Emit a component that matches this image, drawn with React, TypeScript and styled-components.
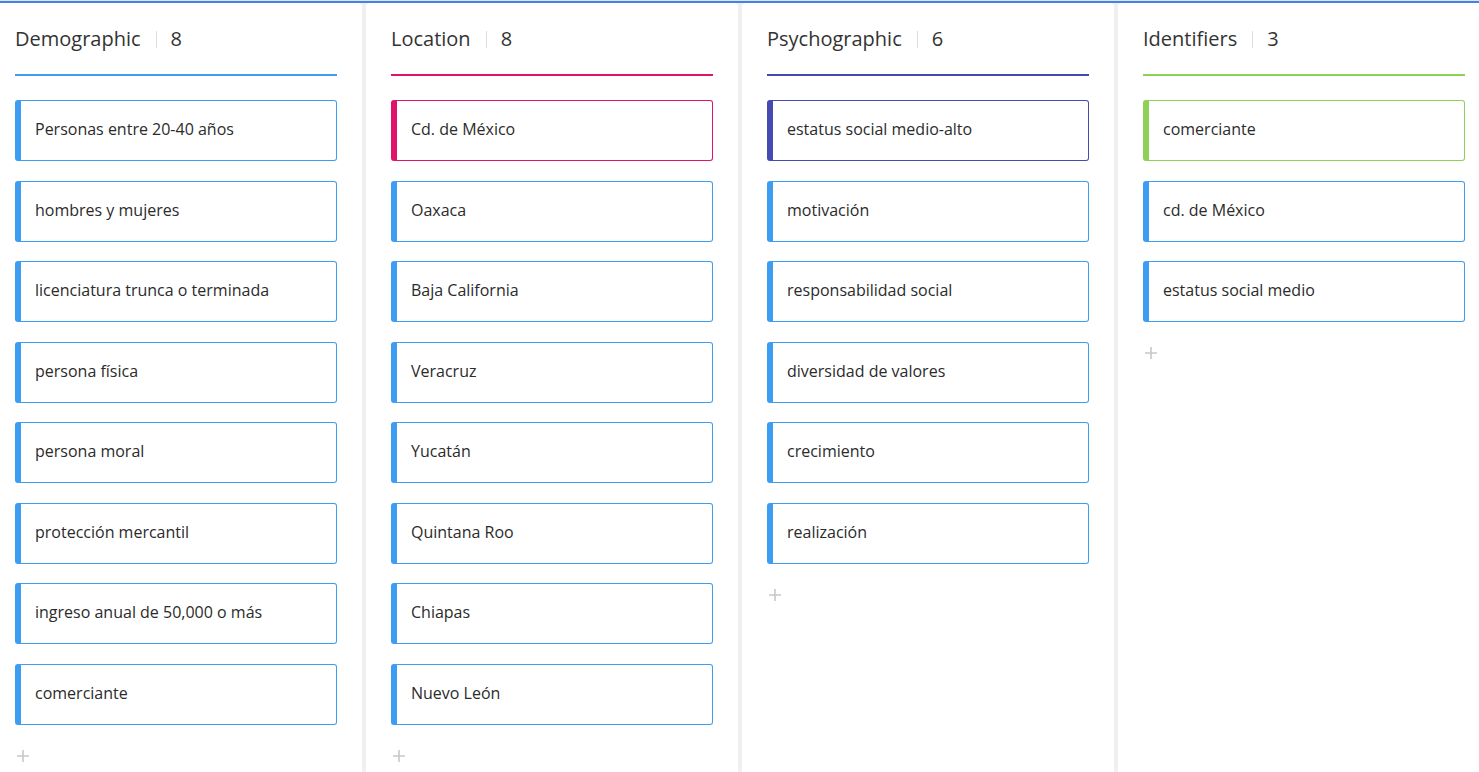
import React from "react";
import styled, { createGlobalStyle } from "styled-components";

const GlobalStyle = createGlobalStyle`
  html, body {
    margin: 0;
    padding: 0;
    height: 100%;
    overflow: hidden;
    background: #f0f0f0;
    font-family: "Open Sans", "Noto Sans", sans-serif;
    color: #333333;
  }
`;

const colors = {
  blue: "#3d9df3",
  pink: "#e0126a",
  indigo: "#4549b0",
  green: "#8fd056",
  divider: "#dddddd",
  plus: "#c8c8c8",
  gutter: "#f0f0f0",
};

const TopBar = styled.div`
  height: 2px;
  border-top: 1px solid #e4e4e4;
  background-color: #3f83ef;
`;

const Board = styled.div`
  display: flex;
  gap: 4px;
  margin-left: -10px;
  height: calc(100vh - 3px);
  background-color: ${colors.gutter};
`;

const Column = styled.section`
  flex: 0 0 372px;
  box-sizing: border-box;
  padding: 0 25px;
  background-color: #ffffff;
  border-radius: 4px 4px 0 0;
`;

const ColumnHeader = styled.header<{ $accent: string }>`
  display: flex;
  align-items: center;
  padding: 22px 0 21px 0;
  border-bottom: 2px solid ${(p) => p.$accent};
  font-size: 20px;
  line-height: 28px;
  color: #333333;
`;

const HeaderDivider = styled.span`
  width: 1px;
  height: 17px;
  margin: 0 14px 0 15px;
  background-color: ${colors.divider};
`;

const CardList = styled.div`
  display: flex;
  flex-direction: column;
  gap: 19.5px;
  margin-top: 24px;
`;

const Card = styled.div<{ $accent: string }>`
  display: flex;
  align-items: center;
  box-sizing: border-box;
  height: 61px;
  padding: 0 0 3px 14px;
  border: 1px solid ${(p) => p.$accent};
  border-left: 6px solid ${(p) => p.$accent};
  border-radius: 3px;
  font-size: 16px;
  color: #2b2b2b;
  background: #ffffff;
`;

const AddButton = styled.button`
  display: block;
  margin: 25px 0 0 2px;
  padding: 0;
  border: 0;
  background: none;
  cursor: pointer;
  line-height: 0;
`;

type ColumnData = {
  title: string;
  accent: string;
  items: string[];
};

const columns: ColumnData[] = [
  {
    title: "Demographic",
    accent: colors.blue,
    items: [
      "Personas entre 20-40 años",
      "hombres y mujeres",
      "licenciatura trunca o terminada",
      "persona física",
      "persona moral",
      "protección mercantil",
      "ingreso anual de 50,000 o más",
      "comerciante",
    ],
  },
  {
    title: "Location",
    accent: colors.pink,
    items: [
      "Cd. de México",
      "Oaxaca",
      "Baja California",
      "Veracruz",
      "Yucatán",
      "Quintana Roo",
      "Chiapas",
      "Nuevo León",
    ],
  },
  {
    title: "Psychographic",
    accent: colors.indigo,
    items: [
      "estatus social medio-alto",
      "motivación",
      "responsabilidad social",
      "diversidad de valores",
      "crecimiento",
      "realización",
    ],
  },
  {
    title: "Identifiers",
    accent: colors.green,
    items: ["comerciante", "cd. de México", "estatus social medio"],
  },
];

const PlusIcon = () => (
  <svg width="12" height="12" viewBox="0 0 12 12">
    <path d="M6 0v12M0 6h12" stroke={colors.plus} strokeWidth="1.6" />
  </svg>
);

export default function App() {
  return (
    <>
      <GlobalStyle />
      <TopBar />
      <Board>
        {columns.map((col) => (
          <Column key={col.title}>
            <ColumnHeader $accent={col.accent}>
              <span>{col.title}</span>
              <HeaderDivider />
              <span>{col.items.length}</span>
            </ColumnHeader>
            <CardList>
              {col.items.map((item, i) => (
                <Card key={item} $accent={i === 0 ? col.accent : colors.blue}>
                  {item}
                </Card>
              ))}
            </CardList>
            <AddButton aria-label="Add item">
              <PlusIcon />
            </AddButton>
          </Column>
        ))}
      </Board>
    </>
  );
}
